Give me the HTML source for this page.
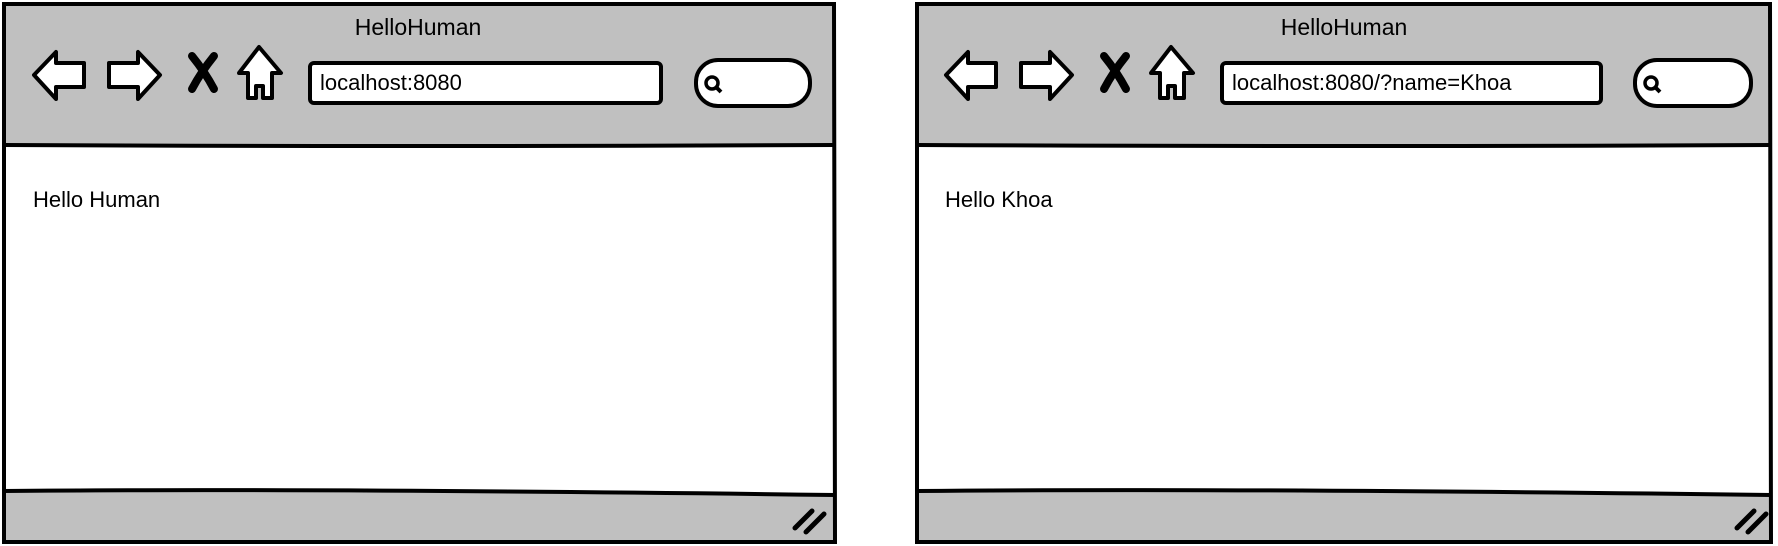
<!DOCTYPE html>
<html><head><style>
html,body{margin:0;padding:0;background:#fff;width:1778px;height:546px;overflow:hidden}
svg{position:absolute;left:0;top:0}
text{font-family:"Liberation Sans",sans-serif;fill:#000}
</style></head><body>
<svg width="1778" height="546" viewBox="0 0 1778 546">
<defs>
<g id="icons">
  <path d="M34 75 L56 52 L56 63 L84 63 L84 87 L56 87 L56 99 Z" fill="#fff" stroke="#000" stroke-width="4" stroke-linejoin="round"/>
  <path d="M160 75 L138 52 L138 63 L109 63 L109 87 L138 87 L138 99 Z" fill="#fff" stroke="#000" stroke-width="4" stroke-linejoin="round"/>
  <path d="M192 56 Q205 72 214 89 M214 56 Q201 72 192 89" stroke="#000" stroke-width="8" fill="none" stroke-linecap="round"/>
  <path d="M259 47 L281 73 L272 73 L272 98 L263 98 L263 86 L256 86 L256 98 L248 98 L248 73 L239 73 Z" fill="#fff" stroke="#000" stroke-width="4" stroke-linejoin="round"/>
</g>
</defs>
<!-- left window -->
<rect x="3" y="3" width="832" height="540" fill="#fff"/>
<path d="M3 144 Q400 147 835 144 L835 3 L3 3 Z" fill="#c0c0c0"/>
<path d="M3 491 Q300 487 835 494 L835 542 L3 542 Z" fill="#c0c0c0"/>
<path d="M4 4 L834 4 L835 542 L4 542 Z" fill="none" stroke="#000" stroke-width="4"/>
<path d="M4 145 Q400 147 835 145" fill="none" stroke="#000" stroke-width="4"/>
<path d="M4 491 Q300 488 835 495" fill="none" stroke="#000" stroke-width="4"/>
<path d="M795 528 L812 511 M806 532 L824 514" stroke="#000" stroke-width="5" stroke-linecap="round"/>
<use href="#icons"/>
<!-- right window -->
<rect x="916" y="3" width="855" height="540" fill="#fff"/>
<path d="M916 144 Q1340 147 1771 144 L1771 3 L916 3 Z" fill="#c0c0c0"/>
<path d="M916 491 Q1230 487 1771 494 L1771 542 L916 542 Z" fill="#c0c0c0"/>
<path d="M917 4 L1770 4 L1771 542 L917 542 Z" fill="none" stroke="#000" stroke-width="4"/>
<path d="M917 145 Q1340 147 1771 145" fill="none" stroke="#000" stroke-width="4"/>
<path d="M917 491 Q1230 488 1771 495" fill="none" stroke="#000" stroke-width="4"/>
<path d="M1737 528 L1754 511 M1748 532 L1766 514" stroke="#000" stroke-width="5" stroke-linecap="round"/>
<use href="#icons" transform="translate(912,0)"/>

<text x="418" y="35" font-size="23" text-anchor="middle">HelloHuman</text>
<text x="1344" y="35" font-size="23" text-anchor="middle">HelloHuman</text>
<rect x="310" y="63" width="351" height="40" rx="4" fill="#fff" stroke="#000" stroke-width="4"/>
<text x="320" y="90" font-size="22">localhost:8080</text>
<rect x="1222" y="63" width="379" height="40" rx="4" fill="#fff" stroke="#000" stroke-width="4"/>
<text x="1232" y="90" font-size="22">localhost:8080/?name=Khoa</text>
<rect x="696" y="60" width="114" height="46" rx="22" fill="#fff" stroke="#000" stroke-width="4"/>
<circle cx="712" cy="83" r="6" fill="none" stroke="#000" stroke-width="3.5"/><path d="M716 87 L721 92" stroke="#000" stroke-width="4"/>
<rect x="1635" y="60" width="116" height="46" rx="22" fill="#fff" stroke="#000" stroke-width="4"/>
<circle cx="1651" cy="83" r="6" fill="none" stroke="#000" stroke-width="3.5"/><path d="M1655 87 L1660 92" stroke="#000" stroke-width="4"/>
<text x="33" y="207" font-size="22">Hello Human</text>
<text x="945" y="207" font-size="22">Hello Khoa</text>
</svg>
</body></html>
